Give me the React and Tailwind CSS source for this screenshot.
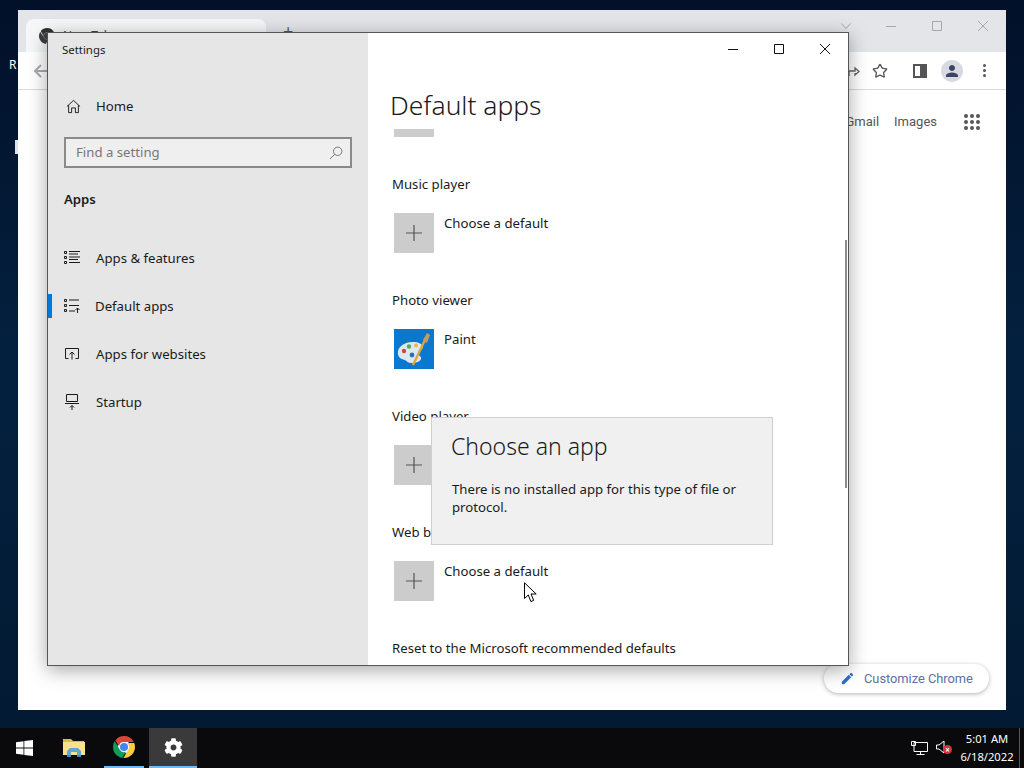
import { Star } from "lucide-react";
import { MdEdit, MdPerson } from "react-icons/md";
import { FaCog } from "react-icons/fa";

const segoe = { fontFamily: '"Noto Sans", "Open Sans", sans-serif' };

const ChromeLogo = ({ className }) => (
    <svg viewBox="0 0 24 24" className={className}>
        <circle cx="12" cy="12" r="7" fill="#fff" />
        <path fill="#db4437" d="M12 0C8.21 0 4.831 1.757 2.632 4.501l3.953 6.848A5.454 5.454 0 0 1 12 6.545h10.691A12 12 0 0 0 12 0z" />
        <path fill="#0f9d58" d="M1.931 5.47A11.943 11.943 0 0 0 0 12c0 6.012 4.42 10.991 10.189 11.864l3.953-6.847a5.45 5.45 0 0 1-6.865-2.29z" />
        <path fill="#ffcd40" d="M15.273 7.636a5.446 5.446 0 0 1 1.45 7.09l.002.001h-.002l-5.344 9.257c.206.01.413.016.621.016 6.627 0 12-5.373 12-12 0-1.54-.29-3.011-.818-4.364z" />
        <circle cx="12" cy="12" r="4.4" fill="#4285f4" />
    </svg>
);

const WindowsLogo = () => (
    <svg viewBox="0 0 17 16" className="w-[17px] h-4" fill="#fff">
        <path d="M0 2.3 7.5 1.2V7.6H0zM8.3 1.1 17 0V7.6H8.3zM0 8.4H7.5V14.8L0 13.7zM8.3 8.4H17V16L8.3 14.9z" />
    </svg>
);

const FolderIcon = () => (
    <svg viewBox="0 0 22 20" className="w-[22px] h-5">
        <path fill="#e0b94e" d="M0 1h8l2 2h11v4H0z" />
        <path fill="#fbe08f" d="M0 4h22v13H0z" />
        <path fill="#5fa8d3" d="M4 17v-4l3-3h8l3 3v4h-4v-3H8v3z" />
        <path fill="#3f8fc0" d="M4 17h4v2H4zM14 17h4v2h-4z" />
    </svg>
);

const HomeIcon = () => (
    <svg viewBox="0 0 16 16" className="w-[15px] h-[15px]" fill="none" stroke="#1a1a1a" strokeWidth="1">
        <path d="M1 8 8 1.5 15 8M2.8 6.5V14.5H6V9.5H10V14.5H13.2V6.5" />
    </svg>
);

const SearchIcon = () => (
    <svg viewBox="0 0 14 14" className="w-[14px] h-[14px]" fill="none" stroke="#777" strokeWidth="1">
        <circle cx="8.7" cy="5.3" r="4.2" />
        <path d="M5.7 8.3 1 13" />
    </svg>
);

const ListIcon = () => (
    <svg viewBox="0 0 16 16" className="w-4 h-4" fill="none" stroke="#1a1a1a" strokeWidth="1">
        <path d="M.5 1.5h2v2h-2zM.5 6.5h2v2h-2zM.5 11.5h2v2h-2zM5 1.5h11M5 4h9M5 7h11M5 9.5h9M5 12.5h11" />
    </svg>
);

const DefaultAppsIcon = () => (
    <svg viewBox="0 0 16 16" className="w-4 h-4" fill="none" stroke="#1a1a1a" strokeWidth="1">
        <path d="M.5 1.5h2v2h-2zM.5 6.5h2v2h-2zM.5 11.5h2v2h-2zM5 2h10M5 7.5h10M5 13h6M13.5 15V10M11.5 12l2-2 2 2" />
    </svg>
);

const WebsitesIcon = () => (
    <svg viewBox="0 0 16 16" className="w-4 h-4" fill="none" stroke="#1a1a1a" strokeWidth="1">
        <path d="M4.5 12.5H1.5V2.5H14.5V12.5H11.5M8 13.5V6M5.5 8.5 8 6l2.5 2.5" />
    </svg>
);

const StartupIcon = () => (
    <svg viewBox="0 0 16 16" className="w-4 h-4" fill="none" stroke="#1a1a1a" strokeWidth="1">
        <path d="M2.5 .5h11v7h-11zM1 9.5h14M8 16V11.5M6 13.5l2-2 2 2" />
    </svg>
);

const PaintIcon = () => (
    <svg viewBox="0 0 40 40" className="w-10 h-10">
        <rect width="40" height="40" fill="#0b78d0" />
        <path fill="#dbe9f4" d="M4 25c-1-6 5-12 15-12 5 0 10 2 10 5 0 3-5 3-5 6 0 3 4 3 3 6-1 3-6 4-10 4-3 0-4-2-6-3-3-1-6-1-7-6z" />
        <circle cx="10" cy="22" r="2.2" fill="#d8433c" />
        <circle cx="15" cy="17.5" r="2.2" fill="#4caf50" />
        <circle cx="22" cy="16.5" r="2" fill="#f2b632" />
        <circle cx="18" cy="26" r="2.4" fill="#2f6fb5" />
        <path d="M19 36 31 11" stroke="#e3a33f" strokeWidth="2.4" />
        <path fill="#c99a5c" d="M29 11 33 4l3 2-3 8z" />
    </svg>
);

const Cursor = () => (
    <svg viewBox="0 0 13 21" className="w-[13px] h-[21px]">
        <path fill="#fff" stroke="#000" strokeWidth="1" d="M.5.8V16.5L4.3 13l2.6 6.6 2.8-1.2L7 12h5.2z" />
    </svg>
);

const NetworkIcon = () => (
    <svg viewBox="0 0 17 15" className="w-[17px] h-[15px]" fill="none" stroke="#fff" strokeWidth="1">
        <path d="M3 1.5H16.5V10.5H3zM.5 .5h4v4h-4zM9.5 10.5v3M5.5 13.5h8" />
    </svg>
);

const SpeakerIcon = () => (
    <div className="relative w-4 h-4">
        <svg viewBox="0 0 10 14" className="w-[10px] h-[14px]" fill="none" stroke="#fff" strokeWidth="1">
            <path d="M.5 5v4h2.5L8 13V1L3 5z" />
        </svg>
        <span className="absolute left-[7px] top-[5px] w-[9px] h-[9px] rounded-full bg-[#d8303c] text-white text-[8px] leading-[9px] text-center font-bold">×</span>
    </div>
);

const navItems = [
    { label: "Apps & features", icon: ListIcon },
    { label: "Default apps", icon: DefaultAppsIcon, active: true },
    { label: "Apps for websites", icon: WebsitesIcon },
    { label: "Startup", icon: StartupIcon },
];

const AddTile = () => (
    <div className="w-10 h-10 bg-[#cccccc] flex items-center justify-center">
        <svg viewBox="0 0 16 16" className="w-4 h-4" stroke="#555" strokeWidth="1.2">
            <path d="M8 0v16M0 8h16" />
        </svg>
    </div>
);

const sections = [
    { label: "Music player", app: "Choose a default" },
    { label: "Photo viewer", app: "Paint", paint: true },
    { label: "Video player", app: "Choose a default" },
    { label: "Web browser", app: "Choose a default" },
];

const ChromeWindow = () => (
    <div className="absolute left-[18px] top-[10px] w-[988px] h-[700px] bg-white flex flex-col">
        {/* Tab strip */}
        <div className="h-[42px] bg-[#e3e5e8] flex items-end relative">
            <div className="ml-2 w-[240px] h-[33px] bg-[#f6f7f8] rounded-t-lg flex items-center pl-[13px] gap-2">
                <ChromeLogo className="w-4 h-4 grayscale brightness-50" />
                <span className="text-xs text-[#444]" style={segoe}>New Tab</span>
            </div>
            <span className="ml-[17px] mb-[9px] text-[#555] text-lg leading-6">+</span>
            <div className="absolute top-[11px] right-[18px] flex gap-[36px] items-center">
                <svg viewBox="0 0 10 6" className="w-[10px] h-[6px] mr-[-1px]" fill="none" stroke="#a5a8ad"><path d="M.5.5 5 5.5 9.5.5" /></svg>
                <svg viewBox="0 0 10 10" className="w-[10px] h-[10px]" fill="none" stroke="#a5a8ad"><path d="M0 5.5h10" /></svg>
                <svg viewBox="0 0 10 10" className="w-[10px] h-[10px]" fill="none" stroke="#a5a8ad"><path d="M.5.5h9v9h-9z" /></svg>
                <svg viewBox="0 0 10 10" className="w-[10px] h-[10px]" fill="none" stroke="#a5a8ad"><path d="M0 0l10 10M10 0 0 10" /></svg>
            </div>
        </div>
        {/* Toolbar */}
        <div className="h-[38px] border-b border-[#d9d9d9] flex items-center pl-[15px] pr-[20px]">
            <svg viewBox="0 0 16 14" className="w-4 h-[14px]" fill="none" stroke="#a8abaf" strokeWidth="2"><path d="M16 7H2M8 1 2 7l6 6" /></svg>
            <div className="ml-auto flex items-center">
                <svg viewBox="0 0 12 12" className="w-3 h-3" fill="none" stroke="#666" strokeWidth="1.3"><path d="M1 11V6h6V3l4 3.5L7 10V8" /></svg>
                <Star className="w-4 h-4 text-[#555] ml-[12px]" strokeWidth={2} />
                <div className="ml-[25px] w-[14px] h-[14px] border-2 border-[#555] flex justify-end">
                    <div className="w-[5px] bg-[#555]" />
                </div>
                <div className="ml-[14px] w-[22px] h-[22px] rounded-full bg-[#d7dae3] flex items-center justify-center">
                    <MdPerson className="w-[18px] h-[18px] text-[#3c4463]" />
                </div>
                <div className="ml-[20px] flex flex-col gap-[2px]">
                    <span className="w-[3px] h-[3px] rounded-full bg-[#555]" />
                    <span className="w-[3px] h-[3px] rounded-full bg-[#555]" />
                    <span className="w-[3px] h-[3px] rounded-full bg-[#555]" />
                </div>
            </div>
        </div>
        {/* Page */}
        <div className="flex-1 flex flex-col">
            <div className="flex items-center justify-end pt-[22px] pr-[26px] text-[13px] text-[#555]" style={{ fontFamily: "Roboto, sans-serif" }}>
                <span>Gmail</span>
                <span className="ml-[15px]">Images</span>
                <div className="ml-[27px] grid grid-cols-3 gap-[2px]">
                    {Array.from({ length: 9 }).map((_, i) => (
                        <span key={i} className="w-1 h-1 rounded-full bg-[#555]" />
                    ))}
                </div>
            </div>
            <div className="mt-auto mb-[17px] mr-[17px] self-end w-[165px] h-[29px] rounded-full bg-white shadow-[0_1px_4px_rgba(60,64,67,0.4)] flex items-center pl-[16px] gap-[9px]" style={{ fontFamily: "Roboto, sans-serif" }}>
                <MdEdit className="w-[15px] h-[15px] text-[#2f6bd0]" />
                <span className="text-[12.8px] text-[#5b6fa8]">Customize Chrome</span>
            </div>
        </div>
    </div>
);

const SettingsWindow = () => (
    <div className="absolute left-[47px] top-[32px] w-[802px] h-[634px] border border-[#555] bg-white flex shadow-[0_4px_18px_rgba(0,0,0,0.35)] text-[#1a1a1a]" style={segoe}>
        {/* Sidebar */}
        <div className="w-[320px] bg-[#e6e6e6] flex flex-col">
            <div className="h-8 flex items-center pl-[14px] pt-px text-[11.4px]">Settings</div>
            <div className="mt-[17px] h-12 flex items-center pl-[18px] gap-[15px] text-[13.2px]">
                <HomeIcon />
                <span className="pt-[2px]">Home</span>
            </div>
            <div className="mt-[7px] ml-4 w-[288px] h-[31px] border-2 border-[#8a8a8a] bg-[#efefef] flex items-center justify-between pl-[10px] pr-[7px] text-[13.2px] text-[#777]">
                <span>Find a setting</span>
                <SearchIcon />
            </div>
            <div className="mt-[19px] h-6 pl-4 pt-[2px] flex items-center text-[13.2px] font-semibold">Apps</div>
            <div className="mt-[23px] flex flex-col">
                {navItems.map(({ label, icon: Icon, active }) => (
                    <div key={label} className="relative h-12 flex items-center pl-4 gap-4 text-[13.2px]">
                        {active && <span className="absolute left-0 top-3 w-1 h-6 bg-[#0078d7]" />}
                        <Icon />
                        <span className={active ? "pt-[2px] -ml-px" : "pt-[2px]"}>{label}</span>
                    </div>
                ))}
            </div>
        </div>

        {/* Content */}
        <div className="relative flex-1 flex flex-col min-w-0">
            <div className="h-8 flex items-center justify-end gap-[36px] pr-[18px]">
                <svg viewBox="0 0 10 10" className="w-[10px] h-[10px]" fill="none" stroke="#111"><path d="M0 5.5h10" /></svg>
                <svg viewBox="0 0 10 10" className="w-[10px] h-[10px]" fill="none" stroke="#111"><path d="M.5.5h9v9h-9z" /></svg>
                <svg viewBox="0 0 10 10" className="w-[10px] h-[10px]" fill="none" stroke="#111"><path d="M0 0l10 10M10 0 0 10" /></svg>
            </div>
            <div className="h-16 pl-[22px] pt-[18px] flex items-center text-[26.4px] font-light">Default apps</div>
            <div className="flex-1 overflow-hidden pl-6 text-[13.2px]">
                <div className="ml-[2px] w-10 h-2 bg-[#cccccc]" />
                {sections.map(({ label, app, paint }) => (
                    <div key={label} className="mt-[37px]">
                        <div className="h-5 leading-5">{label}</div>
                        <div className="mt-[19px] ml-[2px] flex gap-[10px]">
                            {paint ? <PaintIcon /> : <AddTile />}
                            <span className="leading-5">{app}</span>
                        </div>
                    </div>
                ))}
                <div className="mt-[37px] h-5 leading-5">Reset to the Microsoft recommended defaults</div>
            </div>
            <div className="absolute right-px top-[207px] w-[2px] h-[248px] bg-[#8c8c8c]" />

            {/* Flyout */}
            <div className="absolute left-[63px] top-[384px] w-[342px] h-[128px] bg-[#f0f0f0] border border-[#cfcfcf] pt-[12px] pl-[19px] pr-[20px]">
                <div className="text-[23px] font-light leading-8">Choose an app</div>
                <p className="mt-[18px] ml-px text-[13.2px] leading-[18px]">There is no installed app for this type of file or protocol.</p>
            </div>
        </div>
    </div>
);

const Taskbar = () => (
    <div className="h-10 bg-[#0a0a0c] flex items-stretch text-white" style={segoe}>
        <div className="w-12 flex items-center justify-center"><WindowsLogo /></div>
        <div className="w-12 ml-[2px] flex items-center justify-center"><FolderIcon /></div>
        <div className="w-10 ml-[6px] flex items-center justify-center border-b-2 border-[#76b9ed]"><ChromeLogo className="w-[22px] h-[22px]" /></div>
        <div className="w-12 ml-[5px] bg-[#3a3a3a] flex items-center justify-center border-b-2 border-[#76b9ed]">
            <FaCog className="w-[19px] h-[19px]" />
        </div>
        <div className="ml-auto flex items-center">
            <NetworkIcon />
            <div className="ml-2"><SpeakerIcon /></div>
            <div className="ml-[4px] w-[62px] text-center text-[11.2px] leading-[18px]">
                <div>5:01 AM</div>
                <div>6/18/2022</div>
            </div>
            <div className="ml-[1px] h-full w-px bg-[#555]" />
            <div className="w-1" />
        </div>
    </div>
);

export default function App() {
    return (
        <div className="w-[1024px] h-[768px] overflow-hidden flex flex-col">
            <div className="relative flex-1 bg-gradient-to-b from-[#021029] via-[#03213f] to-[#031a33]">
                <span className="absolute left-[9px] top-[57px] text-white text-xs" style={segoe}>R</span>
                <span className="absolute left-[15px] top-[140px] w-[3px] h-[14px] bg-[#dfe4ea]" />
                <ChromeWindow />
                <SettingsWindow />
                <div className="absolute left-[524px] top-[582px]"><Cursor /></div>
            </div>
            <Taskbar />
        </div>
    );
}
